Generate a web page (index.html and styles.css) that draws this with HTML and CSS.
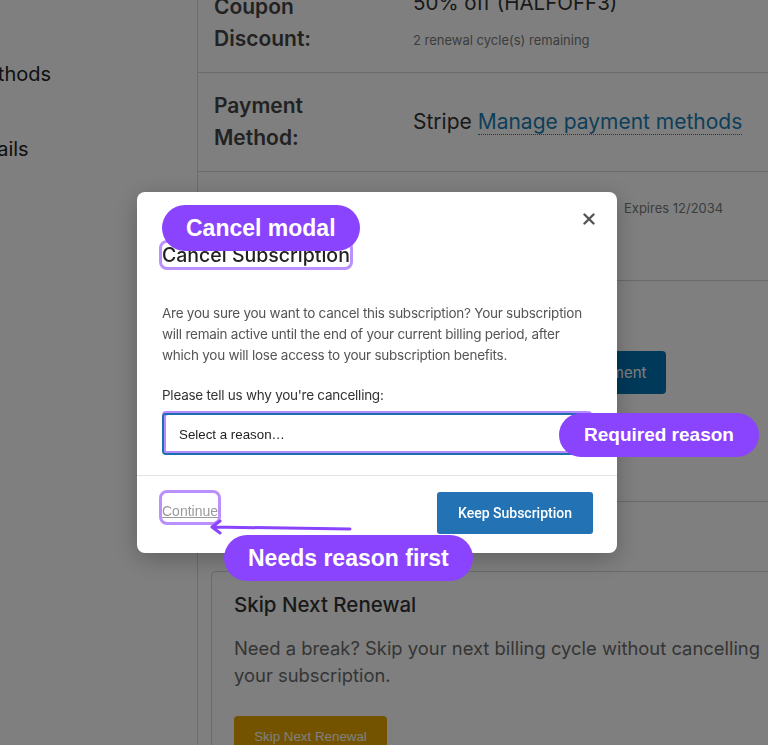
FILE: index.html
```html
<!DOCTYPE html>
<html lang="en">
<head>
    <meta charset="UTF-8">
    <meta name="viewport" content="width=device-width, initial-scale=1.0">
    <title>Subscription details</title>
    <link rel="stylesheet" href="styles.css">
</head>
<body>
    <div class="page">
        <aside class="sidebar">
            <nav class="side-nav">
                <a href="#">Payment Methods</a>
                <a href="#">Account Details</a>
            </nav>
        </aside>

        <main class="content">
            <table class="details">
                <tr>
                    <th>Coupon Discount:</th>
                    <td>
                        <div class="value">50% off (HALFOFF3)</div>
                        <div class="note coupon-note">2 renewal cycle(s) remaining</div>
                    </td>
                </tr>
                <tr>
                    <th>Payment Method:</th>
                    <td class="middle">
                        <span class="value value-lg">Stripe <a href="#" class="link">Manage payment methods</a></span>
                    </td>
                </tr>
                <tr class="card-row">
                    <th>Card:</th>
                    <td>
                        <div class="card-line">
                            <span class="card-name">Visa •••• 4242</span>
                            <span class="note">Expires 12/2034</span>
                        </div>
                    </td>
                </tr>
                <tr class="actions-row">
                    <th>Actions:</th>
                    <td>
                        <div class="btn-row">
                            <button class="btn btn-light">Remove</button>
                            <button class="btn btn-primary">Update Payment</button>
                        </div>
                    </td>
                </tr>
            </table>

            <section class="panel">
                <h3>Skip Next Renewal</h3>
                <p>Need a break? Skip your next billing cycle without cancelling your subscription.</p>
                <button class="btn btn-gold">Skip Next Renewal</button>
            </section>
        </main>
    </div>

    <!-- cancel dialog -->
    <div class="backdrop">
        <div class="modal">
            <div class="modal-header">
                <button class="modal-close" aria-label="Close">
                    <svg width="12" height="12" viewBox="0 0 12 12">
                        <path d="M1.5 1.5 L10.5 10.5 M10.5 1.5 L1.5 10.5" stroke="#555" stroke-width="2.4" stroke-linecap="round"/>
                    </svg>
                </button>
                <h2 class="modal-title hl">Cancel Subscription</h2>
            </div>
            <div class="modal-body">
                <p>Are you sure you want to cancel this subscription? Your subscription will remain active until the end of your current billing period, after which you will lose access to your subscription benefits.</p>
                <label for="reason">Please tell us why you're cancelling:</label>
                <select id="reason" class="reason-select">
                    <option>Select a reason…</option>
                    <option>Too expensive</option>
                    <option>Not using it enough</option>
                    <option>Other</option>
                </select>
            </div>
            <div class="modal-footer">
                <button class="link-btn hl" disabled>Continue</button>
                <button class="btn-keep">Keep Subscription</button>
            </div>
        </div>
    </div>

    <!-- callouts -->
    <div class="notes">
        <span class="pill pill-modal">Cancel modal</span>
        <span class="pill pill-reason">Required reason</span>
        <span class="pill pill-first">Needs reason first</span>
        <svg class="arrow" width="160" height="24" viewBox="0 0 160 24">
            <path d="M152 12 L14 10 M14 10 L22 4 M14 10 L22 16" fill="none" stroke="#8a44fd" stroke-width="3" stroke-linecap="round" stroke-linejoin="round"/>
        </svg>
    </div>
</body>
</html>
```

FILE: styles.css
```css
html, body {
    margin: 0;
    overflow: hidden;
    height: 100%;
}
body {
    font-family: Inter, 'Noto Sans', sans-serif;
    background-color: #fff;
    color: #333;
    position: relative;
}
.page {
    display: flex;
    width: 820px;
    margin-top: -26px;
    min-height: 900px;
}

/* sidebar */
.sidebar {
    width: 197px;
    flex-shrink: 0;
    border-right: 1px solid #d8d8d8;
    overflow: hidden;
}
.side-nav {
    display: flex;
    flex-direction: column;
    margin-left: -120px;
    padding-top: 63px;
}
.side-nav a {
    color: #222;
    text-decoration: none;
    font-size: 20px;
    line-height: 31px;
    padding: 22px 0;
    white-space: nowrap;
}

/* details table */
.content {
    flex: 1;
}
.details {
    width: 100%;
    border-collapse: collapse;
}
.details tr {
    border-bottom: 1px solid #d6d6d6;
}
.details th {
    width: 215px;
    box-sizing: border-box;
    padding: 17px 60px 17px 16px;
    text-align: left;
    vertical-align: top;
    font-size: 21px;
    font-weight: 600;
    line-height: 32px;
    color: #444;
}
.details td {
    padding: 17px 16px 17px 0;
    vertical-align: top;
}
.details td.middle {
    vertical-align: middle;
}
.value {
    font-size: 20.5px;
    line-height: 24px;
    color: #333;
}
.value-lg {
    font-size: 21px;
}
.note {
    font-size: 13px;
    line-height: 20px;
    color: #7a7a7a;
}
.coupon-note {
    margin-top: 15px;
}
.link {
    color: #1b7fb5;
    text-decoration: none;
    border-bottom: 1px dotted #1b7fb5;
}
.card-row td {
    height: 65px;
    padding-top: 26px;
}
.card-line {
    display: flex;
    gap: 14px;
    align-items: center;
}
.card-name {
    width: 197px;
    font-size: 15px;
    color: #333;
}
.actions-row td {
    height: 186px;
}
.btn-row {
    display: flex;
    gap: 10px;
    margin-top: 53px;
}
.btn {
    font-family: 'Liberation Sans', Arial, sans-serif;
    border: none;
    border-radius: 4px;
    cursor: pointer;
}
.btn-light {
    background-color: #eee;
    color: #333;
    height: 43px;
    padding: 0 15px;
    font-size: 15px;
}
.btn-primary {
    background-color: #0073b3;
    color: #fff;
    height: 43px;
    padding: 0 20px;
    font-size: 15px;
    font-family: Inter, sans-serif;
}

/* skip renewal card */
.panel {
    margin: 69px 13px 0 13px;
    border: 1px solid #d6d6d6;
    border-radius: 4px;
    padding: 18px 22px 22px;
}
.panel h3 {
    margin: 0;
    font-size: 20.5px;
    font-weight: 500;
    line-height: 30px;
    color: #333;
}
.panel p {
    margin: 15px 0 27px;
    font-size: 18.4px;
    line-height: 27px;
    color: #6b6b6b;
}
.btn-gold {
    background-color: #e6a600;
    color: #fff;
    width: 153px;
    height: 40px;
    font-size: 13.33px;
}

/* modal */
.backdrop {
    position: fixed;
    inset: 0;
    background-color: rgba(0, 0, 0, 0.5);
    display: flex;
    align-items: center;
    justify-content: center;
    padding-right: 14px;
}
.modal {
    width: 480px;
    background-color: #fff;
    border-radius: 8px;
    box-shadow: 0 6px 24px rgba(0, 0, 0, 0.25);
}
.modal-header {
    display: flex;
    flex-direction: column;
    padding: 19px 20px 0 25px;
}
.modal-close {
    align-self: flex-end;
    width: 16px;
    height: 16px;
    padding: 0;
    border: none;
    background: none;
    display: flex;
    align-items: center;
    justify-content: center;
    cursor: pointer;
}
.modal-title {
    align-self: flex-start;
    margin: 16px 0 0;
    font-size: 19.5px;
    font-weight: 500;
    line-height: 24px;
    color: #222;
}
.hl {
    outline: 3px solid rgba(178, 132, 255, 0.9);
    border-radius: 5px;
}
.modal-body {
    padding: 0 25px 20px;
}
.modal-body p {
    margin: 36px 0 19px;
    font-size: 13.5px;
    letter-spacing: -0.25px;
    line-height: 21px;
    color: #555;
}
.modal-body label {
    display: block;
    font-size: 13.5px;
    letter-spacing: -0.25px;
    line-height: 21px;
    color: #333;
    margin-bottom: 7px;
}
.reason-select {
    display: block;
    width: 100%;
    height: 42px;
    padding: 0 15px;
    border: 2px solid #1d6fb0;
    border-radius: 4px;
    outline: none;
    box-shadow: 0 -2px 0 0 #b58cff, inset 0 -2px 0 0 #b58cff, inset 2px 0 0 0 #b58cff;
    background-color: #fff;
    font-family: 'Liberation Sans', Arial, sans-serif;
    font-size: 13.33px;
    color: #222;
    appearance: none;
}
.modal-footer {
    display: flex;
    justify-content: space-between;
    align-items: flex-start;
    border-top: 1px solid #e2e2e2;
    padding: 16px 24px 19px 25px;
}
.link-btn {
    margin-top: 1px;
    padding: 10px 0 2px;
    border: none;
    background: none;
    color: #9a9a9a;
    text-decoration: underline;
    font-family: 'Liberation Sans', Arial, sans-serif;
    font-size: 14px;
    line-height: 17px;
}
.btn-keep {
    width: 156px;
    height: 42px;
    border: none;
    border-radius: 3px;
    background-color: #2272b4;
    color: #fff;
    font-family: Roboto, 'Liberation Sans', sans-serif;
    font-weight: 500;
    font-size: 14px;
    cursor: pointer;
}

/* callout pills */
.notes {
    position: absolute;
    top: 0;
    left: 0;
    width: 768px;
    height: 745px;
    pointer-events: none;
}
.pill {
    position: absolute;
    display: flex;
    align-items: center;
    height: 46px;
    padding: 0 24px;
    border-radius: 23px;
    background-color: #8a44fd;
    color: #fff;
    font-family: 'Liberation Sans', Arial, sans-serif;
    font-weight: bold;
    font-size: 23px;
    white-space: nowrap;
}
.pill-modal {
    left: 162px;
    top: 205px;
}
.pill-reason {
    left: 559px;
    top: 413px;
    height: 44px;
    padding: 0 25px;
    border-radius: 22px;
    font-size: 19px;
}
.pill-first {
    left: 224px;
    top: 535px;
}
.arrow {
    position: absolute;
    left: 198px;
    top: 517px;
}
```
